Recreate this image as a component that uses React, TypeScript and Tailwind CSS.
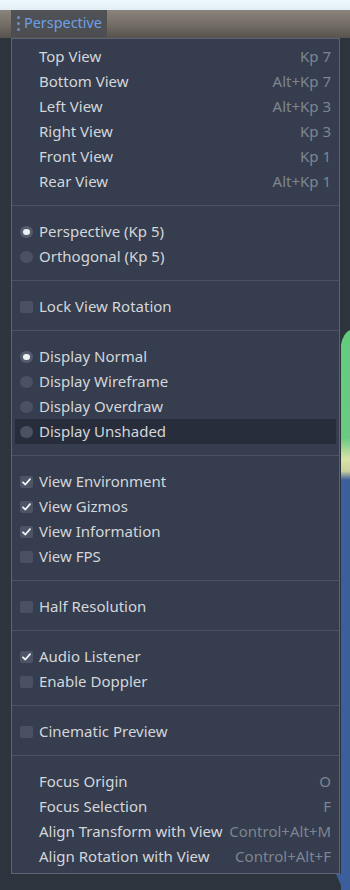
import React from "react";

type Item =
  | { kind: "sep" }
  | { kind: "item"; label: string; shortcut?: string; mark?: "radio-on" | "radio-off" | "check-on" | "check-off"; hover?: boolean };

const items: Item[] = [
  { kind: "item", label: "Top View", shortcut: "Kp 7" },
  { kind: "item", label: "Bottom View", shortcut: "Alt+Kp 7" },
  { kind: "item", label: "Left View", shortcut: "Alt+Kp 3" },
  { kind: "item", label: "Right View", shortcut: "Kp 3" },
  { kind: "item", label: "Front View", shortcut: "Kp 1" },
  { kind: "item", label: "Rear View", shortcut: "Alt+Kp 1" },
  { kind: "sep" },
  { kind: "item", label: "Perspective (Kp 5)", mark: "radio-on" },
  { kind: "item", label: "Orthogonal (Kp 5)", mark: "radio-off" },
  { kind: "sep" },
  { kind: "item", label: "Lock View Rotation", mark: "check-off" },
  { kind: "sep" },
  { kind: "item", label: "Display Normal", mark: "radio-on" },
  { kind: "item", label: "Display Wireframe", mark: "radio-off" },
  { kind: "item", label: "Display Overdraw", mark: "radio-off" },
  { kind: "item", label: "Display Unshaded", mark: "radio-off", hover: true },
  { kind: "sep" },
  { kind: "item", label: "View Environment", mark: "check-on" },
  { kind: "item", label: "View Gizmos", mark: "check-on" },
  { kind: "item", label: "View Information", mark: "check-on" },
  { kind: "item", label: "View FPS", mark: "check-off" },
  { kind: "sep" },
  { kind: "item", label: "Half Resolution", mark: "check-off" },
  { kind: "sep" },
  { kind: "item", label: "Audio Listener", mark: "check-on" },
  { kind: "item", label: "Enable Doppler", mark: "check-off" },
  { kind: "sep" },
  { kind: "item", label: "Cinematic Preview", mark: "check-off" },
  { kind: "sep" },
  { kind: "item", label: "Focus Origin", shortcut: "O" },
  { kind: "item", label: "Focus Selection", shortcut: "F" },
  { kind: "item", label: "Align Transform with View", shortcut: "Control+Alt+M" },
  { kind: "item", label: "Align Rotation with View", shortcut: "Control+Alt+F" },
];

function Mark({ mark }: { mark?: string }) {
  if (!mark) return <span className="w-[13px] h-[13px] shrink-0" />;
  if (mark === "radio-on")
    return (
      <span className="w-[13px] h-[12px] shrink-0 rounded-full bg-[#555c6d] flex items-center justify-center">
        <span className="w-[7px] h-[6px] rounded-full bg-[#eef0f2]" />
      </span>
    );
  if (mark === "radio-off") return <span className="w-[13px] h-[12px] shrink-0 rounded-full bg-[#4a5163]" />;
  if (mark === "check-on")
    return (
      <span className="w-[13px] h-[12px] shrink-0 rounded-[2px] bg-[#4d5466] flex items-center justify-center">
        <svg width="9" height="8" viewBox="0 0 9 8">
          <path d="M1 4.3 L3.4 6.5 L8 1.2" fill="none" stroke="#f2f3f5" strokeWidth="1.8" strokeLinecap="round" strokeLinejoin="round" />
        </svg>
      </span>
    );
  return <span className="w-[13px] h-[12px] shrink-0 rounded-[2px] bg-[#4a5163]" />;
}

export default function App() {
  return (
    <div
      className="relative w-[350px] h-[890px] overflow-hidden bg-[#2d343c]"
      style={{ fontFamily: "'Noto Sans', 'Open Sans', sans-serif" }}
    >
      {/* viewport backdrop */}
      <div className="absolute inset-0 flex flex-col">
        <div className="h-[10px] bg-gradient-to-b from-[#eef7fc] to-[#e2eef5]" />
        <div className="h-[28px] bg-gradient-to-b from-[#8a847b] via-[#746e66] to-[#56524d]" />
        <div className="flex-1 bg-[#2d343d]" />
      </div>
      <svg className="absolute left-0 top-0" width="350" height="890" viewBox="0 0 350 890">
        <defs>
          <linearGradient id="g" x1="0" y1="0" x2="0" y2="1">
            <stop offset="0" stopColor="#62cc7c" />
            <stop offset="0.72" stopColor="#6acb7f" />
            <stop offset="0.86" stopColor="#d9e3a6" />
            <stop offset="0.94" stopColor="#c9d29a" />
            <stop offset="1" stopColor="#3e5f9c" />
          </linearGradient>
        </defs>
        <path d="M341 345 Q343 333 350 330 L350 480 L341 480 Z" fill="url(#g)" />
        <rect x="341" y="480" width="9" height="410" fill="#3d5e9d" />
        <path d="M336 874 L350 874 L350 890 L343 890 Z" fill="#3d5e9d" />
      </svg>

      {/* header button */}
      <div className="absolute left-[11px] top-[10px] w-[96px] h-[27px] bg-[#4a4d52]/90 flex items-center">
        <div className="ml-[6px] flex flex-col gap-[3px]">
          <span className="w-[3px] h-[3px] rounded-full bg-[#6f8fbf]" />
          <span className="w-[3px] h-[3px] rounded-full bg-[#6f8fbf]" />
          <span className="w-[3px] h-[3px] rounded-full bg-[#6f8fbf]" />
        </div>
        <span className="ml-[4px] text-[14.4px] leading-none text-[#6d9fe6]">Perspective</span>
      </div>

      {/* popup menu */}
      <div className="absolute left-[11px] top-[38px] w-[329px] h-[836px] border border-[#5c6372] bg-[#353d4e] pt-[5px] pb-[4px] px-[3px] flex flex-col">
        {items.map((it, i) =>
          it.kind === "sep" ? (
            <div key={i} className="h-[25px] -mx-[3px] flex items-center">
              <div className="h-px w-full bg-[#4b5262] -translate-y-[1px]" />
            </div>
          ) : (
            <div
              key={i}
              className={`h-[25px] flex items-center pl-[5px] pr-[5px] text-[15px] ${it.hover ? "bg-[#272d3b]" : ""}`}
            >
              <Mark mark={it.mark} />
              <span className="ml-[6px] text-[#d4d6da] whitespace-nowrap">{it.label}</span>
              {it.shortcut && (
                <span className="ml-auto text-[#7e8591] whitespace-nowrap">{it.shortcut}</span>
              )}
            </div>
          )
        )}
      </div>
    </div>
  );
}
